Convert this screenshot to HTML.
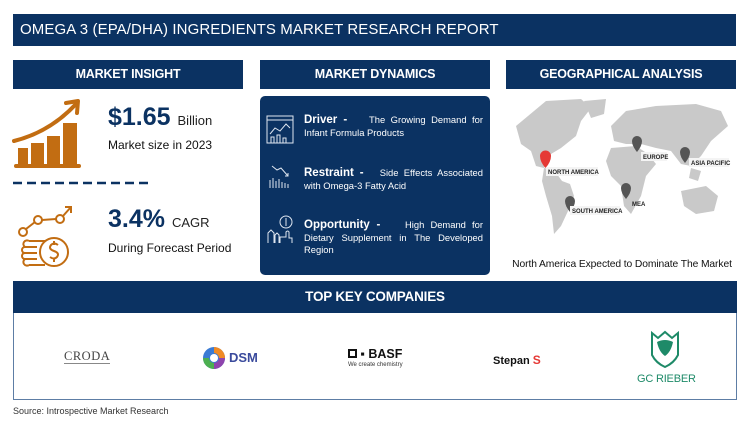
<!DOCTYPE html>
<html><head><meta charset="utf-8"><style>
*{margin:0;padding:0;box-sizing:border-box}
body{width:750px;height:432px;background:#fff;position:relative;overflow:hidden;font-family:"Liberation Sans",sans-serif;color:#111}
.a{position:absolute}
.nav{background:#0b3262;color:#fff}
.hd{font-weight:bold;font-size:12.5px;text-align:center;line-height:29px;letter-spacing:-0.2px}
.dy{color:#fff;font-size:9.4px;line-height:12.5px;text-align:justify}
.dy b{font-size:11.5px}
</style></head><body>
<div class="a nav" style="left:13px;top:14px;width:723px;height:32px;font-size:15px;line-height:32px;padding-left:7px;letter-spacing:0.1px">OMEGA 3 (EPA/DHA) INGREDIENTS MARKET RESEARCH REPORT</div>

<div class="a nav hd" style="left:13px;top:60px;width:230px;height:29px">MARKET INSIGHT</div>
<div class="a nav hd" style="left:260px;top:60px;width:230px;height:29px">MARKET DYNAMICS</div>
<div class="a nav hd" style="left:506px;top:60px;width:230px;height:29px">GEOGRAPHICAL ANALYSIS</div>

<svg class="a" style="left:0;top:0" width="160" height="280">
<g fill="#c26d12">
<rect x="18" y="148" width="10" height="18"/><rect x="31" y="143" width="13" height="23"/><rect x="47" y="136" width="13" height="30"/><rect x="63" y="123" width="14" height="43"/>
<rect x="14" y="164" width="67" height="4" rx="2"/>
</g>
<path d="M14 141 Q50 132 76 104" fill="none" stroke="#c26d12" stroke-width="4" stroke-linecap="round"/>
<path d="M66 103 L78 101 L77 113" fill="none" stroke="#c26d12" stroke-width="4" stroke-linecap="round" stroke-linejoin="round"/>
<line x1="13" y1="183" x2="148" y2="183" stroke="#0b3262" stroke-width="2.5" stroke-dasharray="9,5"/>
<g fill="none" stroke="#c26d12" stroke-width="2">
<circle cx="23" cy="232" r="4"/><circle cx="38" cy="220" r="4"/><circle cx="60" cy="219" r="4"/>
<path d="M26 229 L35 222 M42 220 L56 219 M63 216 L71 207 M65 207 L71 207 L71 213"/>
<circle cx="54" cy="252" r="14"/>
<path d="M29 241 h16 M25 247 h12 M25 253 h12 M25 259 h12 M29 265 h16 M25 247 a3 3 0 0 0 0 6 a3 3 0 0 0 0 6 M29 241 a3 3 0 0 0 -4 6 M25 259 a3 3 0 0 0 4 6"/>
<path d="M58 245 q-4 -3 -7 0 q-3 4 3 6 q6 2 3 6 q-3 3 -7 0 M54 241 v4 M54 258 v4"/>
</g>
</svg>
<div class="a" style="left:108px;top:103px;font-size:25px;font-weight:bold;color:#0b3262">$1.65 <span style="font-size:13px;color:#222;font-weight:normal">Billion</span></div>
<div class="a" style="left:108px;top:138px;font-size:12px">Market size in 2023</div>
<div class="a" style="left:108px;top:205px;font-size:25px;font-weight:bold;color:#0b3262">3.4% <span style="font-size:13px;color:#222;font-weight:normal">CAGR</span></div>
<div class="a" style="left:108px;top:241px;font-size:12px">During Forecast Period</div>

<div class="a nav" style="left:260px;top:96px;width:230px;height:179px;border-radius:5px"></div>
<svg class="a" style="left:260px;top:100px" width="40" height="160" fill="none" stroke="#dfe6f0" stroke-width="1">
<rect x="7" y="16" width="26" height="27"/><line x1="7" y1="20" x2="33" y2="20"/><path d="M10 34 L15 28 L20 31 L26 24 L30 28"/><path d="M11 43 v-6 h3 v6 M17 43 v-8 h3 v8 M23 43 v-5 h3 v5"/>
<path d="M12 66 L17 70 L21 68 L28 76 M25 76 h3 v-3"/><path d="M10 88 v-8 M13 88 v-10 M16 88 v-7 M19 88 v-9 M22 88 v-6 M25 88 v-5 M28 88 v-4"/>
<circle cx="26" cy="122" r="6"/><path d="M26 118 v8"/><path d="M8 143 v-10 l3 -3 l3 3 v10 M15 143 v-8 l2 -2 l2 2 v8 M20 143 v-6 h6 v-5 q2 -2 3 0 v6 h3 v5"/>
</svg>
<div class="a dy" style="left:304px;top:114px;width:179px"><b>Driver -</b>&nbsp;&nbsp;&nbsp; The Growing Demand for Infant Formula Products</div>
<div class="a dy" style="left:304px;top:167px;width:179px"><b>Restraint -</b>&nbsp;&nbsp; Side Effects Associated with Omega-3 Fatty Acid</div>
<div class="a dy" style="left:304px;top:219px;width:179px"><b>Opportunity -</b>&nbsp;&nbsp;&nbsp; High Demand for Dietary Supplement in The Developed Region</div>

<svg class="a" style="left:506px;top:96px" width="230" height="160">
<g fill="#c9c9c9">
<path d="M10 30 L40 5 L75 3 L85 12 L75 25 L70 40 L55 52 L45 58 L38 72 L30 70 L25 55 L15 48 Z"/>
<path d="M38 72 L48 74 L56 85 L64 88 L68 100 L62 115 L55 130 L48 138 L46 120 L40 100 L36 85 Z"/>
<path d="M78 5 L100 3 L98 18 L85 22 Z"/>
<path d="M105 30 L120 15 L150 10 L190 8 L215 15 L222 30 L205 45 L195 60 L185 70 L175 68 L165 55 L150 52 L135 48 L120 48 L108 45 Z"/>
<path d="M105 52 L130 50 L142 58 L150 68 L140 80 L135 100 L125 118 L118 110 L115 90 L105 80 L100 65 Z"/>
<path d="M175 95 L200 90 L212 100 L208 115 L190 118 L178 110 Z"/>
<path d="M185 72 L195 75 L192 85 L183 82 Z"/>
</g>
<g fill="#555"><path d="M126 45 a5 5 0 1 1 10 0 q0 5 -5 11 q-5 -6 -5 -11z"/><path d="M174 56 a5 5 0 1 1 10 0 q0 5 -5 11 q-5 -6 -5 -11z"/><path d="M115 92 a5 5 0 1 1 10 0 q0 5 -5 11 q-5 -6 -5 -11z"/><path d="M59 105 a5 5 0 1 1 10 0 q0 5 -5 11 q-5 -6 -5 -11z"/></g>
<path d="M34 60 a5.5 5.5 0 1 1 11 0 q0 6 -5.5 12 q-5.5 -6 -5.5 -12z" fill="#e53935"/>
<g font-size="6" font-weight="bold" fill="#222">
<rect x="40" y="71" width="52" height="9" fill="#f4f4f4"/><text x="42" y="78">NORTH AMERICA</text>
<rect x="135" y="56" width="26" height="9" fill="#f4f4f4"/><text x="137" y="63">EUROPE</text>
<rect x="183" y="62" width="40" height="9" fill="#f4f4f4"/><text x="185" y="69">ASIA PACIFIC</text>
<text x="126" y="110">MEA</text>
<rect x="64" y="110" width="50" height="9" fill="#f4f4f4"/><text x="66" y="117">SOUTH AMERICA</text>
</g>
</svg>
<div class="a" style="left:500px;top:259px;width:244px;text-align:center;font-size:10.3px;white-space:nowrap;letter-spacing:-0.1px">North America Expected to Dominate The Market</div>

<div class="a" style="left:13px;top:281px;width:724px;height:119px;border:1px solid #5d7da5"></div>
<div class="a nav hd" style="left:13px;top:281px;width:724px;height:32px;line-height:32px;font-size:13.5px">TOP KEY COMPANIES</div>
<div class="a" style="left:64px;top:350px;font-family:'Liberation Serif',serif;font-size:12.5px;color:#444;letter-spacing:0.5px;border-bottom:1px solid #888;line-height:13px">CRODA</div>
<svg class="a" style="left:202px;top:344px" width="26" height="28"><circle cx="12" cy="14" r="11" fill="#3b7bd4"/><path d="M12 3 a11 11 0 0 1 11 11 h-6 a5 5 0 0 0 -5 -5z" fill="#f08a24"/><path d="M1 14 a11 11 0 0 0 11 11 v-6 a5 5 0 0 1 -5 -5z" fill="#4caf50"/><path d="M12 25 a11 11 0 0 0 11-11 h-6 a5 5 0 0 1 -5 5z" fill="#8e44ad"/><circle cx="12" cy="14" r="4" fill="#fff"/></svg>
<div class="a" style="left:229px;top:350px;font-weight:bold;font-size:13px;color:#3a4a9c">DSM</div>
<div class="a" style="left:348px;top:348px;font-weight:bold;font-size:12.5px;color:#111;line-height:13px"><span style="display:inline-block;width:9px;height:9px;border:2.5px solid #111;vertical-align:0"></span> ▪ BASF</div>
<div class="a" style="left:348px;top:362px;font-size:6px;color:#333">We create chemistry</div>
<div class="a" style="left:493px;top:353px;font-weight:bold;font-size:11px;color:#111">Stepan <span style="color:#e53935;font-size:12px">S</span></div>
<svg class="a" style="left:648px;top:330px" width="34" height="38"><path d="M4 3 l6 5 l7 -6 l7 6 l6 -5 v22 q-4 8 -13 12 q-9 -4 -13 -12z" fill="none" stroke="#1e8a68" stroke-width="2"/><path d="M9 12 q8 -4 16 0 q-2 10 -8 14 q-6 -4 -8 -14z" fill="#1e8a68"/></svg>
<div class="a" style="left:637px;top:373px;font-size:11px;color:#1e8a68;letter-spacing:-0.2px">GC RIEBER</div>
<div class="a" style="left:13px;top:406px;font-size:9px;color:#333">Source: Introspective Market Research</div>
</body></html>
